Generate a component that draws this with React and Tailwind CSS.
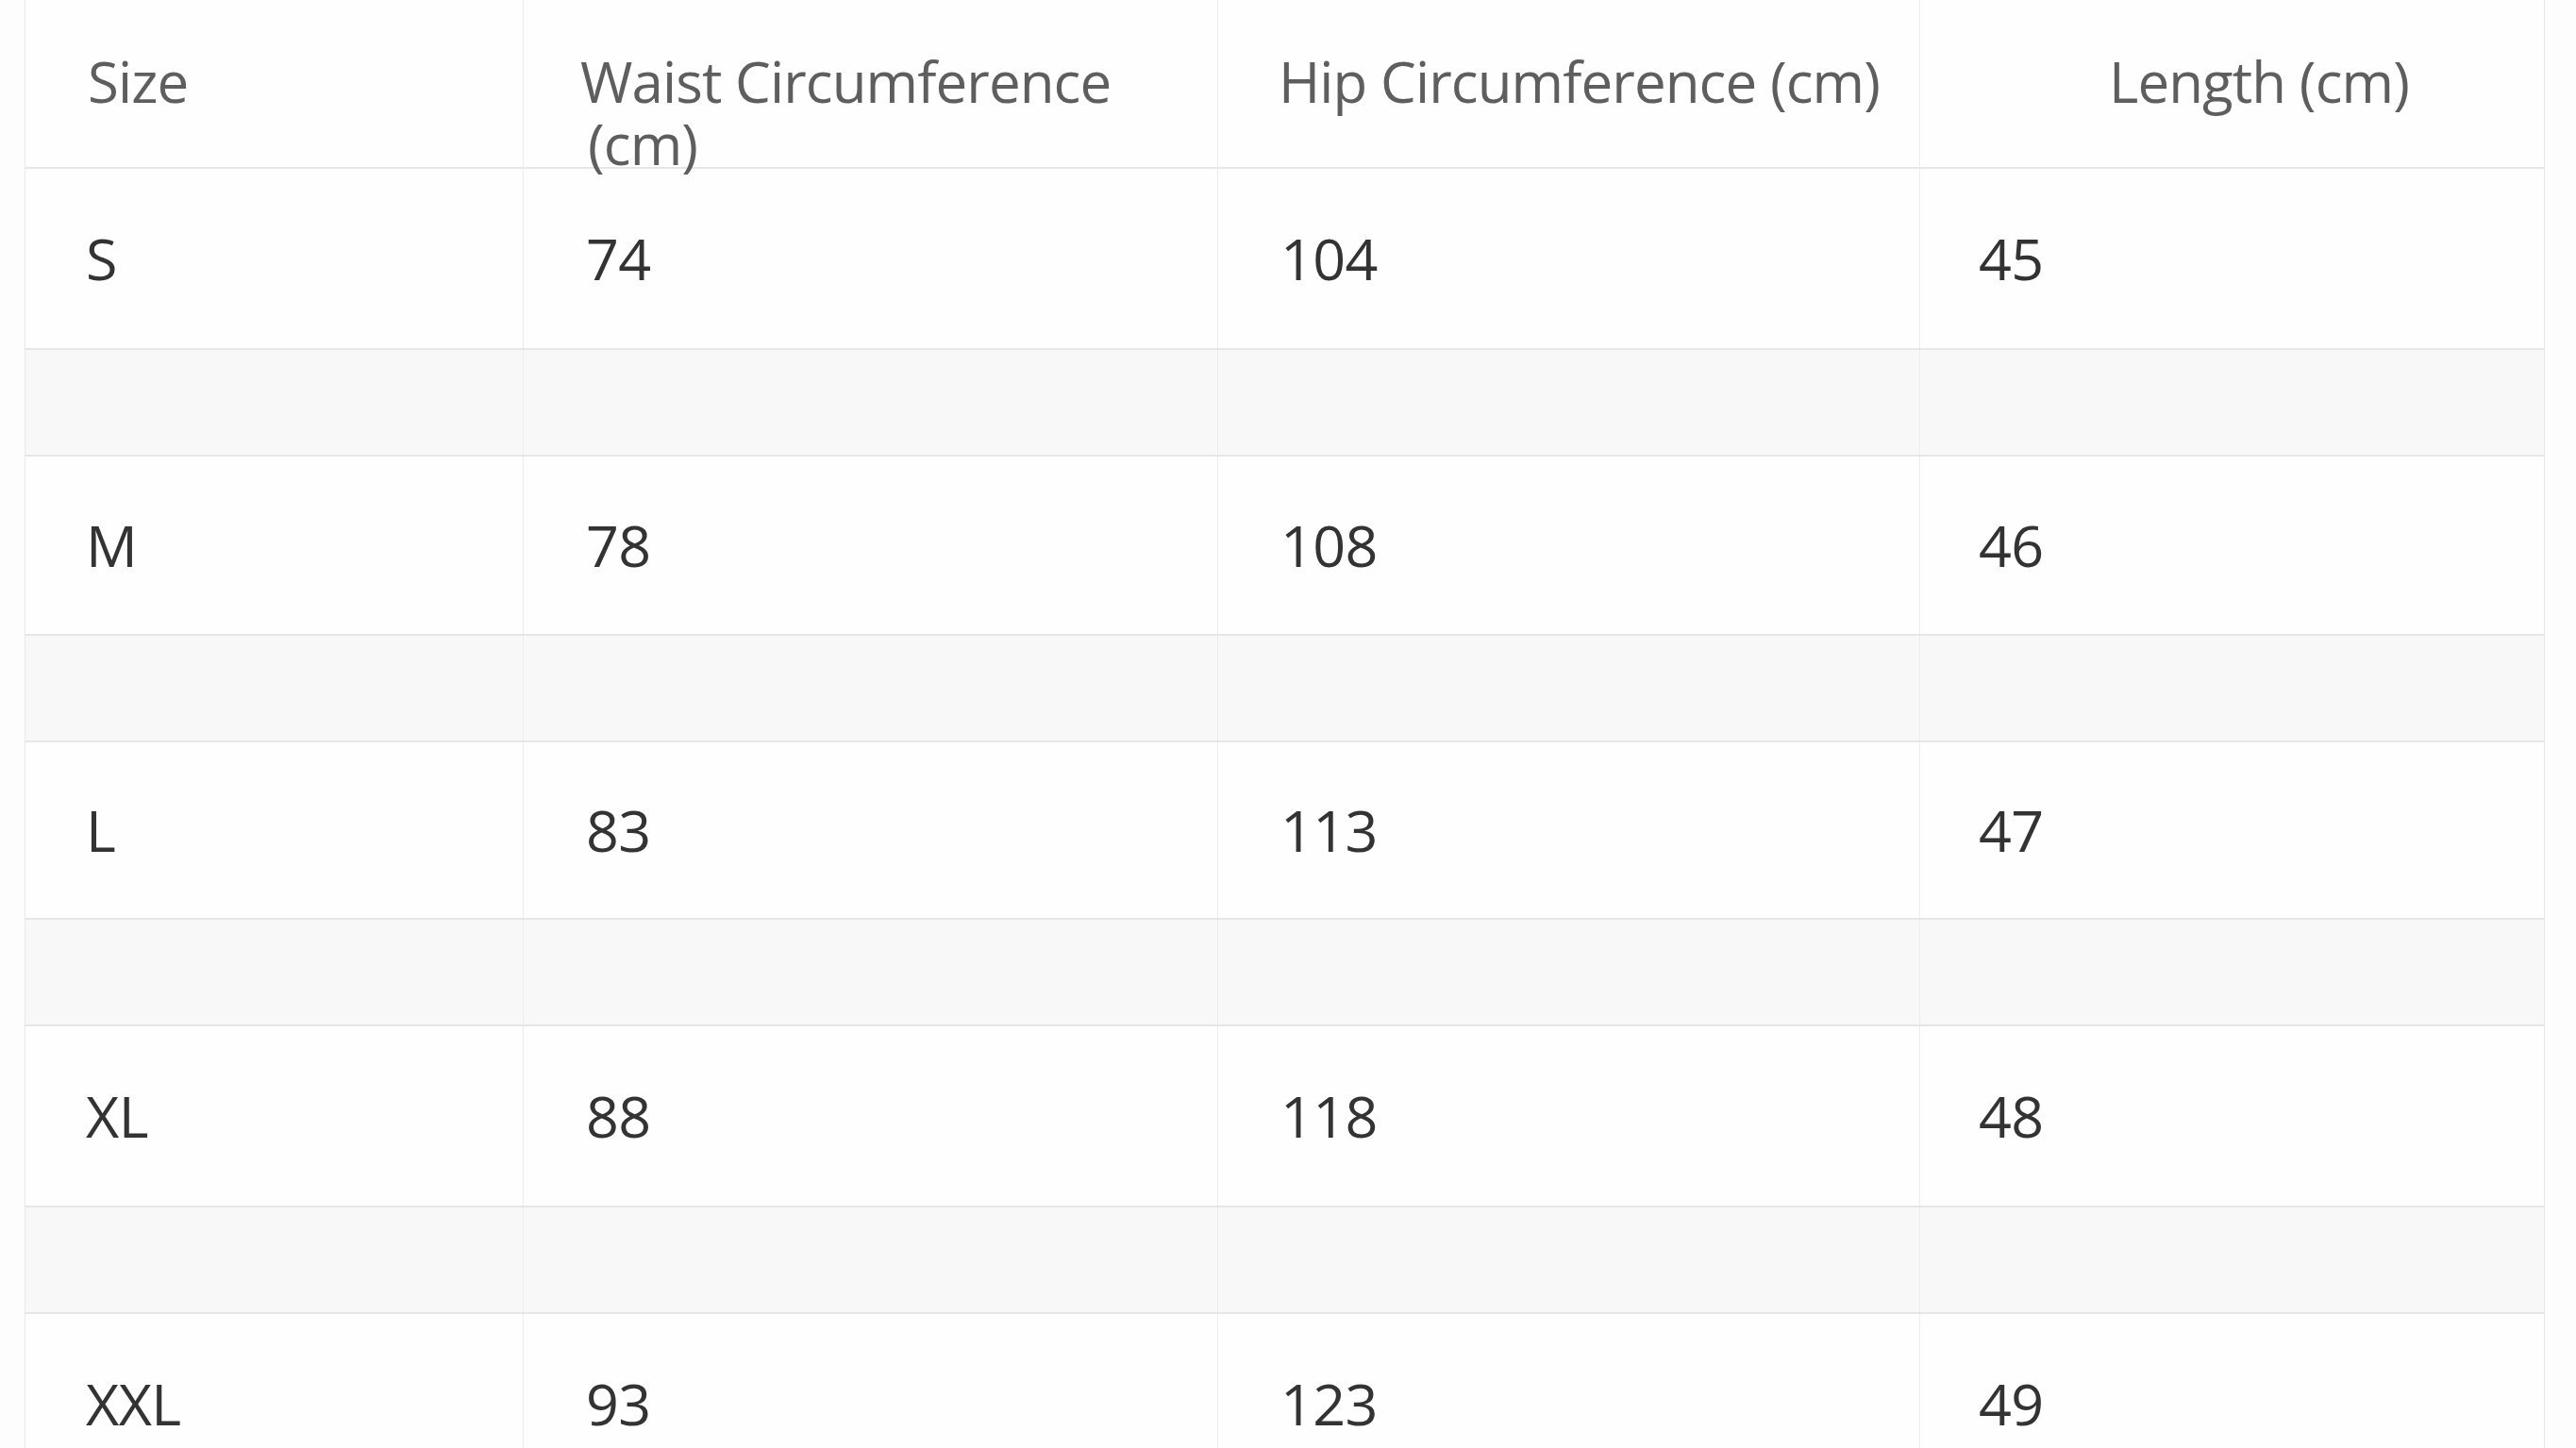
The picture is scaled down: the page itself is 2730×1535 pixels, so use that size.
import React from "react";

const rows = [
  ["S", "74", "104", "45"],
  ["M", "78", "108", "46"],
  ["L", "83", "113", "47"],
  ["XL", "88", "118", "48"],
  ["XXL", "93", "123", "49"],
];

const font = { fontFamily: '"Open Sans", "Noto Sans", sans-serif' };

function DataRow({ r, h }) {
  return (
    <div className={`grid grid-cols-[528px_736px_744px_661px] border-b-2 border-[#e6e6e6] ${h}`}>
      <div className="flex items-center border-r border-[#ececec] pl-[64px] text-[61px] leading-[66px] text-[#333333] tracking-[-0.6px]">{r[0]}</div>
      <div className="flex items-center border-r border-[#ececec] pl-[66px] text-[61px] leading-[66px] text-[#333333] tracking-[-0.6px]">{r[1]}</div>
      <div className="flex items-center border-r border-[#ececec] pl-[66px] text-[61px] leading-[66px] text-[#333333] tracking-[-0.6px]">{r[2]}</div>
      <div className="flex items-center pl-[62px] text-[61px] leading-[66px] text-[#333333] tracking-[-0.6px]">{r[3]}</div>
    </div>
  );
}

function BlankRow() {
  return (
    <div className="grid h-[113px] grid-cols-[528px_736px_744px_661px] border-b-2 border-[#e6e6e6] bg-[#f8f8f8]">
      <div className="border-r border-[#ececec]" />
      <div className="border-r border-[#ececec]" />
      <div className="border-r border-[#ececec]" />
      <div />
    </div>
  );
}

export default function App() {
  return (
    <div className="h-[1535px] w-[2730px] overflow-hidden bg-[#fdfdfd]" style={font}>
      <div className="ml-[26px] w-[2671px] border-x border-[#e8e8e8] bg-[#fefefe]">
        <div className="grid h-[179px] grid-cols-[528px_736px_744px_661px] border-b-2 border-[#e6e6e6] text-[60px] leading-[66px] text-[#5e5e5e] tracking-[-0.9px]">
          <div className="border-r border-[#ececec] pl-[66px] pt-[53px]">Size</div>
          <div className="border-r border-[#ececec] pl-[60px] pt-[53px]">
            <div>Waist Circumference</div>
            <div className="pl-[8px]">(cm)</div>
          </div>
          <div className="whitespace-nowrap border-r border-[#ececec] pl-[64px] pt-[53px]">Hip Circumference (cm)</div>
          <div className="whitespace-nowrap pl-[200px] pt-[53px]">Length (cm)</div>
        </div>
        <DataRow r={rows[0]} h="h-[192px]" />
        <BlankRow />
        <DataRow r={rows[1]} h="h-[190px]" />
        <BlankRow />
        <DataRow r={rows[2]} h="h-[188px]" />
        <BlankRow />
        <DataRow r={rows[3]} h="h-[192px]" />
        <BlankRow />
        <DataRow r={rows[4]} h="h-[192px]" />
      </div>
    </div>
  );
}
